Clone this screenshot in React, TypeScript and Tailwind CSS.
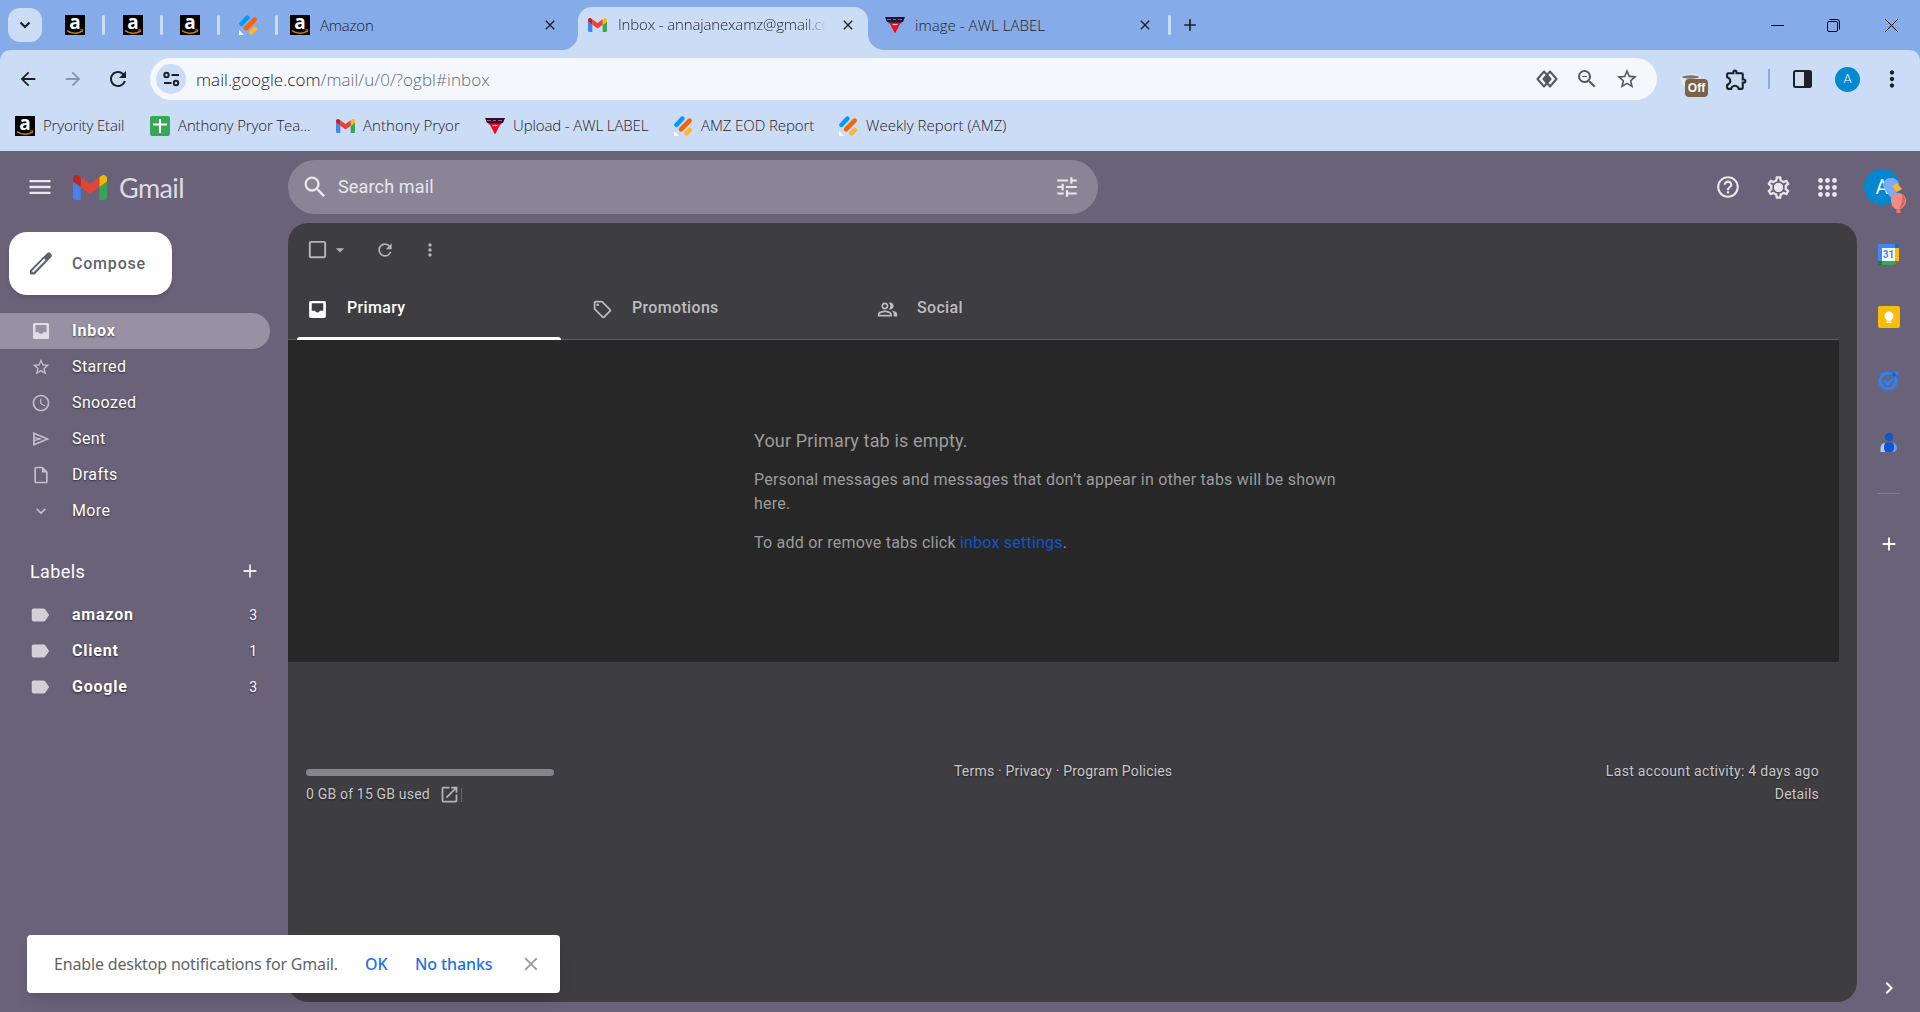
import React from 'react';
import {
  MdAccessTime,
  MdAdd,
  MdArrowBack,
  MdArrowDropDown,
  MdArrowForward,
  MdCheckBoxOutlineBlank,
  MdChevronRight,
  MdClose,
  MdExpandMore,
  MdHelpOutline,
  MdLabel,
  MdMenu,
  MdMoreVert,
  MdOpenInNew,
  MdOutlineExtension,
  MdOutlineInsertDriveFile,
  MdOutlineLocalOffer,
  MdOutlinePeopleAlt,
  MdOutlineSettings,
  MdRefresh,
  MdSearch,
  MdStarBorder,
  MdTune,
  MdZoomOut,
} from 'react-icons/md';

// ---------- logos ----------

const AmazonIcon: React.FC = () => (
  <svg width="20" height="20" viewBox="0 0 20 20" className="shrink-0 overflow-visible">
    <rect width="20" height="20" fill="#000" />
    <text x="10" y="14" textAnchor="middle" fontSize="19" fontWeight="bold" fontFamily="Open Sans, sans-serif" fill="#fff">
      a
    </text>
    <path d="M2 15.6c4.5 3.4 11 3.4 15 .6" fill="none" stroke="#c47a17" strokeWidth="1.6" />
    <path d="M15 15l3-.2-.8 2.6" fill="none" stroke="#c47a17" strokeWidth="1" />
  </svg>
);

const JotIcon: React.FC = () => (
  <svg width="20" height="20" viewBox="0 0 20 20" className="shrink-0">
    <g fill="none" strokeLinecap="round">
      <path d="M3.4 9L9.4 2.6" stroke="#0099ff" strokeWidth="4.4" />
      <path d="M8 13.4L16.6 4.6" stroke="#ff6100" strokeWidth="4.6" />
      <path d="M13.4 17.4l3.2-3.4" stroke="#ffb629" strokeWidth="4.6" />
    </g>
    <path d="M1 15v5h5z" fill="#fff" />
  </svg>
);

const AwlIcon: React.FC = () => (
  <svg width="20" height="20" viewBox="0 0 20 20" className="shrink-0">
    <path d="M0 2h20l-2 5H2z" fill="#2a1030" />
    <path d="M2 4.5h4m2 0h3m2 0h4" stroke="#d0456b" strokeWidth="1.2" />
    <path d="M3.500 7.500h13" stroke="#4a2448" strokeWidth="1.5" />
    <path d="M4.500 8h11l-5.500 10.500z" fill="#f5081c" />
    <path d="M7.5 9.5h5" stroke="#fbc4c8" strokeWidth="1.2" />
  </svg>
);

const SheetIcon: React.FC = () => (
  <svg width="20" height="20" viewBox="0 0 20 20" className="shrink-0">
    <rect width="20" height="20" rx="2" fill="#34a853" />
    <path d="M10 3v14M3 8.5h14" stroke="#fff" strokeWidth="2.2" />
  </svg>
);

const GmailLogo: React.FC<{ width: number; height: number }> = ({ width, height }) => (
  <svg width={width} height={height} viewBox="52 42 88 66" preserveAspectRatio="none" className="shrink-0">
    <path fill="#4285f4" d="M58 108h14V74L52 59v43c0 3.32 2.69 6 6 6" />
    <path fill="#34a853" d="M120 108h14c3.32 0 6-2.69 6-6V59l-20 15" />
    <path fill="#fbbc04" d="M120 48v26l20-15v-8c0-7.42-8.47-11.65-14.4-7.2" />
    <path fill="#ea4335" d="M72 74V48l24 18 24-18v26L96 92" />
    <path fill="#c5221f" d="M52 51v8l20 15V48l-5.6-4.2c-5.94-4.45-14.4-.22-14.4 7.2" />
  </svg>
);

// ---------- small glyphs ----------

interface GlyphProps {
  size?: number;
  className?: string;
}

const InboxIcon: React.FC<GlyphProps> = ({ size = 20, className }) => (
  <svg width={size} height={size} viewBox="0 0 20 20" fill="currentColor" className={className}>
    <path
      fillRule="evenodd"
      d="M3.500 2h13A1.500 1.500 0 0 1 18 3.500v13a1.500 1.500 0 0 1-1.500 1.500h-13A1.500 1.500 0 0 1 2 16.500v-13A1.500 1.500 0 0 1 3.500 2zM4.500 4v7.200H7.700a2.400 2.400 0 0 0 4.600 0h3.200V4z"
    />
  </svg>
);

const SendIcon: React.FC<GlyphProps> = ({ size = 20, className }) => (
  <svg width={size} height={size} viewBox="0 0 20 20" fill="none" stroke="currentColor" className={className}>
    <path d="M2.900 4.300L16.500 10 2.900 15.700z" strokeWidth="1.700" />
    <path d="M3 8.300L9 10l-6 1.700" strokeWidth="1.400" />
  </svg>
);

// ---------- browser window ----------

const TabDivider = () => <div className="h-5 w-[3px] shrink-0 rounded-full bg-[#cbdcf6]" />;

const TabStrip: React.FC = () => (
  <div className="flex h-[50px] items-center bg-[#85ace9]">
    <button className="ml-2 flex h-[34px] w-[34px] items-center justify-center rounded-xl bg-[#cbdcf6]">
      <svg width="12" height="12" viewBox="0 0 12 12" fill="none" stroke="#1f2023" strokeWidth="2.2">
        <path d="M1.5 3.5L6 8l4.500-4.500" />
      </svg>
    </button>
    <div className="ml-[23px] flex items-center gap-[17.3px]">
      <AmazonIcon />
      <TabDivider />
      <AmazonIcon />
      <TabDivider />
      <AmazonIcon />
      <TabDivider />
      <JotIcon />
      <TabDivider />
    </div>
    <div className="ml-[11.9px] flex w-[288px] items-center">
      <AmazonIcon />
      <span className="ml-2.5 flex-1 tracking-[-0.2px]">Amazon</span>
      <MdClose size={16} className="mr-5" />
    </div>
    <div className="relative flex h-[43px] w-[290px] items-center self-end rounded-t-[14px] bg-[#cbdcf6] pb-2">
      <svg width="16" height="16" viewBox="0 0 16 16" className="absolute -left-4 bottom-0">
        <path d="M16 0v16H0A16 16 0 0 0 16 0" fill="#cbdcf6" />
      </svg>
      <svg width="16" height="16" viewBox="0 0 16 16" className="absolute -right-4 bottom-0">
        <path d="M0 0v16h16A16 16 0 0 1 0 0" fill="#cbdcf6" />
      </svg>
      <div className="ml-[10px] flex">
        <GmailLogo width={19} height={14} />
      </div>
      <span className="ml-[11px] w-[208px] overflow-hidden whitespace-nowrap tracking-[-0.15px] [mask-image:linear-gradient(to_right,#000_90%,transparent)]">
        Inbox - annajanexamz@gmail.com
      </span>
      <MdClose size={16} className="ml-[14px] shrink-0" />
    </div>
    <div className="ml-[17px] flex w-[283px] items-center">
      <AwlIcon />
      <span className="ml-2.5 flex-1 tracking-[0.05px]">image - AWL LABEL</span>
      <MdClose size={16} className="mr-[15px]" />
    </div>
    <TabDivider />
    <MdAdd size={20} className="ml-[9px]" />
    <div className="ml-auto mr-[22px] flex items-center text-black">
      <svg width="13" height="13" viewBox="0 0 13 13" className="mr-[43px]">
        <path d="M0 6.500h13" stroke="currentColor" />
      </svg>
      <svg width="13" height="13" viewBox="0 0 13 13" fill="none" stroke="currentColor" className="mr-[45px]">
        <rect x=".5" y="2.500" width="10" height="10" rx="1.500" />
        <path d="M2.500.5h7.500a2.500 2.500 0 0 1 2.500 2.500v7.500" />
      </svg>
      <svg width="13" height="13" viewBox="0 0 13 13" stroke="currentColor">
        <path d="M0 0l13 13M13 0L0 13" />
      </svg>
    </div>
  </div>
);

const AddressBar: React.FC = () => (
  <div className="flex h-[58px] items-center">
    <MdArrowBack size={22} className="ml-[17px]" />
    <MdArrowForward size={22} className="ml-[23px] text-[#8794ad]" />
    <MdRefresh size={24} className="ml-[22px]" />
    <div className="ml-[20px] flex h-[42px] w-[1507px] items-center rounded-full bg-[#f4f8fd]">
      <div className="ml-1.5 flex h-[30px] w-[30px] items-center justify-center rounded-full bg-[#cbdcf6]">
        <svg width="17" height="16" viewBox="0 0 17 16" fill="none" stroke="#1f2023" strokeWidth="2">
          <circle cx="3.500" cy="4" r="2.200" />
          <path d="M8.500 4H16M1 12h7.500" />
          <circle cx="13" cy="12" r="2.200" />
        </svg>
      </div>
      <span className="ml-2.5 flex-1 pt-px text-[17px] tracking-[0.06px]">
        mail.google.com<span className="text-[#66696d]">/mail/u/0/?ogbl#inbox</span>
      </span>
      <svg width="22" height="18" viewBox="0 0 22 18" fill="none" stroke="#55585c" strokeWidth="2">
        <path d="M8 1.500L1.500 9 8 16.500l6.500-7.500z" strokeLinejoin="round" />
        <path d="M14 1.500L7.500 9l6.500 7.500L20.500 9z" strokeLinejoin="round" />
        <path d="M11 5.500L8 9l3 3.500L14 9z" fill="#55585c" />
      </svg>
      <MdZoomOut size={24} className="ml-[17px] text-[#55585c]" />
      <MdStarBorder size={24} className="ml-4 mr-[18px] text-[#55585c]" />
    </div>
    <div className="relative ml-[23px] h-6 w-[28px]">
      <svg width="22" height="16" viewBox="0 0 22 16" className="absolute left-0 top-[7px]">
        <ellipse cx="10.500" cy="3" rx="9.500" ry="2.500" fill="#777" stroke="#e8e6e0" strokeWidth="1.500" />
        <path d="M1 4l1 6 4 4V6z" fill="#ecebe8" />
      </svg>
      <span className="absolute left-[5px] top-[12px] flex h-[18px] w-[23px] items-center justify-center rounded bg-[#7a6247] font-['Liberation_Sans',sans-serif] text-xs font-bold text-white">
        Off
      </span>
    </div>
    <MdOutlineExtension size={25} className="ml-[16px]" />
    <div className="ml-[19px] h-5 w-0.5 bg-[#85ace9]" />
    <svg width="19" height="18" viewBox="0 0 19 18" className="ml-[23px]">
      <rect x="1" y="1" width="17" height="16" rx="1.500" fill="none" stroke="#1f2023" strokeWidth="2" />
      <path d="M11 1h7v16h-7z" fill="#1f2023" />
    </svg>
    <div className="ml-[23px] flex h-[25px] w-[25px] items-center justify-center rounded-full bg-[#0288d1] font-[Roboto,sans-serif] text-[13px] text-white">
      A
    </div>
    <MdMoreVert size={26} className="ml-[19px]" />
  </div>
);

// widths cover the gap to the next bookmark
const bookmarks = [
  { icon: <AmazonIcon />, label: 'Pryority Etail', width: 'w-[135px]', tracking: 'tracking-[-0.15px]' },
  { icon: <SheetIcon />, label: 'Anthony Pryor Tea...', width: 'w-[186px]', tracking: 'tracking-[-0.13px]' },
  { icon: <GmailLogo width={19} height={14} />, label: 'Anthony Pryor', width: 'w-[149px]', tracking: 'tracking-[0.04px]' },
  { icon: <AwlIcon />, label: 'Upload - AWL LABEL', width: 'w-[188px]', tracking: 'tracking-[-0.12px]' },
  { icon: <JotIcon />, label: 'AMZ EOD Report', width: 'w-[165px]', tracking: 'tracking-[-0.1px]' },
  { icon: <JotIcon />, label: 'Weekly Report (AMZ)', width: 'w-[180px]', tracking: 'tracking-[0.04px]' },
];

const BookmarksBar: React.FC = () => (
  <div className="flex h-[36px] items-center pl-[15px]">
    {bookmarks.map(b => (
      <div key={b.label} className={`flex items-center gap-2 whitespace-nowrap ${b.width} ${b.tracking}`}>
        {b.icon}
        <span className="pb-px">{b.label}</span>
      </div>
    ))}
  </div>
);

// ---------- gmail ----------

const GmailHeader: React.FC = () => (
  <header className="flex h-[72px] shrink-0 items-center text-[#e8e7eb]">
    <MdMenu size={28} className="ml-[26px]" />
    <div className="ml-[19px] flex opacity-95">
      <GmailLogo width={34} height={25} />
    </div>
    <span className="ml-[12px] w-[169px] font-[Lato,sans-serif] text-[27px] leading-none tracking-[-0.6px] text-[#dddbe2]">
      Gmail
    </span>
    <div className="flex h-[54px] w-[810px] items-center rounded-full bg-[#8a8596]">
      <MdSearch size={28} className="ml-[13px]" />
      <span className="ml-[9px] flex-1 pb-px text-[18px] tracking-[0.15px]">Search mail</span>
      <MdTune size={26} className="mr-[18px]" />
    </div>
    <MdHelpOutline size={26} className="ml-[617px]" />
    <svg width="27" height="27" viewBox="0 0 24 24" className="ml-[24px] shrink-0">
      <MdOutlineSettings size={24} />
      <circle cx="12" cy="12" r="4" fill="#e8e7eb" />
    </svg>
    <svg width="19" height="19" viewBox="0 0 19 19" fill="currentColor" className="ml-[26px] shrink-0">
      {[2.5, 9.5, 16.5].map(y => [2.5, 9.5, 16.5].map(x => <circle key={`${x}-${y}`} cx={x} cy={y} r="2.400" />))}
    </svg>
    <div className="relative ml-[27px] flex h-9 w-9 shrink-0 items-center justify-center rounded-full bg-[#0288d1] text-[20px] text-white">
      A
      <svg width="24" height="38" viewBox="0 0 24 38" className="absolute left-[19px] top-[9px]">
        <path d="M0 8a8 8 0 1 1 14 5l-2 6-3 2-4-5z" fill="#7baaf7" />
        <path d="M9 8l5-3 5 6-5 3z" fill="#fbb829" />
        <path d="M8 22c0-5 3-7 7-7s8 3 8 7.500c0 5-4 9-8 9s-7-4-7-9.500" fill="#ee8c86" />
        <path d="M19 16c5 4 4 12-3 15 3-5 4-10 3-15" fill="#e0645d" />
        <path d="M14 31h3l1 4h-5z" fill="#e8776f" />
      </svg>
    </div>
  </header>
);

interface NavItem {
  icon: React.ComponentType<GlyphProps>;
  label: string;
  active?: boolean;
}

const navItems: NavItem[] = [
  { icon: InboxIcon, label: 'Inbox', active: true },
  { icon: MdStarBorder, label: 'Starred' },
  { icon: MdAccessTime, label: 'Snoozed' },
  { icon: SendIcon, label: 'Sent' },
  { icon: MdOutlineInsertDriveFile, label: 'Drafts' },
  { icon: MdExpandMore, label: 'More' },
];

const labels = [
  { name: 'amazon', count: 3 },
  { name: 'Client', count: 1 },
  { name: 'Google', count: 3 },
];

const Sidebar: React.FC = () => (
  <nav className="w-[288px] shrink-0 text-white">
    <button className="ml-[9px] mt-[9px] flex h-[63px] w-[163px] items-center rounded-[18px] bg-white text-[#5f6368] shadow-md">
      <svg width="22" height="23" viewBox="0 0 22 23" className="ml-[21px]" fill="#5f6368">
        <path
          fillRule="evenodd"
          d="M0 18.300L17 1.200a2.400 2.400 0 0 1 3.400 0l.7.8a2.400 2.400 0 0 1 0 3.300L4.600 22.500H0zM2.300 20.200h1.300L15.600 7.900l-1.400-1.400L2.300 18.800z"
        />
      </svg>
      <span className="ml-[20px] text-base font-medium tracking-[0.8px]">Compose</span>
    </button>
    <div className="mt-[18px] [text-shadow:0_1px_2px_rgba(0,0,0,0.6)]">
      {navItems.map(({ icon: Icon, label, active }) => (
        <div
          key={label}
          className={`flex h-9 w-[270px] items-center pl-[31px] text-base ${
            active ? 'rounded-r-full bg-[#9891a3] font-bold tracking-[0.8px]' : 'tracking-[0.38px]'
          }`}
        >
          <Icon size={20} className={active ? 'text-[#e0dee5]' : 'text-[#c3c0c9]'} />
          <span className="ml-[21px]">{label}</span>
        </div>
      ))}
    </div>
    <div className="mt-[22px] flex h-10 items-center pl-[30px] pr-[27px]">
      <span className="flex-1 text-[18px] tracking-[0.4px]">Labels</span>
      <MdAdd size={22} className="text-[#e8e7eb]" />
    </div>
    <div className="mt-[6px] [text-shadow:0_1px_2px_rgba(0,0,0,0.6)]">
      {labels.map(l => (
        <div key={l.name} className="flex h-9 items-center pl-[29px] pr-[31px]">
          <MdLabel size={22} className="text-[#d3d1d8]" />
          <span className="ml-[21px] flex-1 text-base font-bold tracking-[0.8px]">{l.name}</span>
          <span className="text-[14px]">{l.count}</span>
        </div>
      ))}
    </div>
  </nav>
);

const tabs: NavItem[] = [
  { icon: InboxIcon, label: 'Primary', active: true },
  { icon: MdOutlineLocalOffer, label: 'Promotions' },
  { icon: MdOutlinePeopleAlt, label: 'Social' },
];

const MailPanel: React.FC = () => (
  <main className="flex h-[779px] w-[1569px] flex-col rounded-[20px] bg-[#3e3d42]">
    <div className="flex h-[54px] items-center pl-[18px] text-[#b5b5b7]">
      <MdCheckBoxOutlineBlank size={23} className="mb-px" />
      <MdArrowDropDown size={20} className="ml-px" />
      <MdRefresh size={20} className="ml-[25px]" />
      <MdMoreVert size={20} className="ml-[25px]" />
    </div>
    <div className="flex h-[63px] w-[1551px] border-b border-[#5c5b5f]">
      {tabs.map(({ icon: Icon, label, active }) => (
        <div
          key={label}
          className={`relative flex w-[285px] items-center pl-[19px] text-base font-medium tracking-[0.33px] ${
            active ? 'text-white' : 'text-[#bdbdbf]'
          }`}
        >
          <Icon size={21} className="mt-[3px]" />
          <span className="-mt-px ml-[19px]">{label}</span>
          {active && <div className="absolute -bottom-px left-[9px] h-[3px] w-[264px] rounded-t-sm bg-white" />}
        </div>
      ))}
    </div>
    <section className="h-[322px] w-[1551px] bg-[#272727] pl-[466px] pt-[87px] text-base leading-6 tracking-[0.22px] text-[#9c9c9c]">
      <p className="text-[18px] leading-[28px] tracking-[0.15px]">Your Primary tab is empty.</p>
      <p className="mt-[13px] w-[600px]">
        Personal messages and messages that don’t appear in other tabs will be shown here.
      </p>
      <p className="mt-[15px]">
        To add or remove tabs click <a className="text-[#0b57d0]">inbox settings</a>.
      </p>
    </section>
    <footer className="mt-[98px] flex pl-[18px] pr-[38px] text-sm leading-[23px] text-[#c8c8ca] [text-shadow:0_1px_2px_rgba(0,0,0,0.5)]">
      <div className="w-[648px]">
        <div className="mt-[9px] h-[7px] w-[248px] rounded bg-[#80868b]" />
        <div className="mt-[7px] flex items-center">
          <span className="w-[133px] whitespace-nowrap tracking-[0.18px]">0 GB of 15 GB used</span>
          <MdOpenInNew size={21} className="mr-px text-[#b5b5b7]" />
          <div className="h-3.5 w-px bg-[#6b6a6e]" />
        </div>
      </div>
      <span className="flex-1 tracking-[0.19px]">Terms · Privacy · Program Policies</span>
      <div className="text-right">
        <div className="tracking-[0.31px]">Last account activity: 4 days ago</div>
        <div className="tracking-[0.2px]">Details</div>
      </div>
    </footer>
  </main>
);

const SidePanel: React.FC = () => (
  <aside className="flex flex-1 flex-col items-center pt-[21px]">
    <svg width="21" height="21" viewBox="0 0 21 21">
      <path d="M0 1.500C0 .5.500 0 1.500 0H17v4H4v13H0z" fill="#4285f4" />
      <path d="M17 0h2.500C20.500 0 21 .5 21 1.500V4h-4z" fill="#1967d2" />
      <path d="M17 4h4v13h-4z" fill="#fbbc04" />
      <path d="M4 17h13v4H4z" fill="#34a853" />
      <path d="M0 17h4v4H1.500C.5 21 0 20.500 0 19.500z" fill="#188038" />
      <path d="M17 17h4l-4 4z" fill="#ea4335" />
      <path d="M4 4h13v13H4z" fill="#fff" />
      <text x="10.500" y="14" textAnchor="middle" fontSize="10" fontWeight="bold" fontFamily="Roboto, sans-serif" fill="#4285f4">
        31
      </text>
    </svg>
    <svg width="22" height="22" viewBox="0 0 22 22" className="mt-[41px]">
      <rect width="22" height="22" rx="2" fill="#fbbc04" />
      <circle cx="11" cy="10" r="4.500" fill="#fff" />
      <path d="M8.500 12h5v2.500h-5zM8.500 15.500h5V17h-5z" fill="#fff" />
    </svg>
    <svg width="21" height="21" viewBox="0 0 21 21" fill="none" className="mt-[42px]">
      <circle cx="10" cy="11" r="8" stroke="#2684fc" strokeWidth="3" />
      <path d="M6 10.500l3.500 3.500 5-5" stroke="#2684fc" strokeWidth="3" />
      <path d="M13.500 5l2.500-2.500 2.500 2.500L16 7.500z" fill="#0066da" />
      <circle cx="18.800" cy="3" r="2" fill="#2684fc" />
    </svg>
    <svg width="18" height="20" viewBox="0 0 18 20" className="mt-[42px]">
      <circle cx="9" cy="4" r="4" fill="#0b57d0" />
      <path d="M5 10C2 10 .5 13 .5 16v3H5z" fill="#aecbfa" />
      <path d="M12 10c3 0 5 2 5 5s-2 4-5 4z" fill="#669df6" />
      <rect x="4" y="9.500" width="10" height="9.500" rx="4" fill="#0b57d0" />
    </svg>
    <div className="mt-[40px] h-px w-[23px] bg-[#857e91]" />
    <MdAdd size={22} className="mt-[39px] text-white" />
    <MdChevronRight size={24} className="mt-auto mb-3 text-white" />
  </aside>
);

const Toast: React.FC = () => (
  <div className="absolute left-[27px] top-[935px] flex h-[58px] w-[533px] items-center rounded bg-white text-base text-[#5f6368] shadow-lg">
    <span className="ml-[27px] w-[311px] whitespace-nowrap tracking-[-0.17px]">Enable desktop notifications for Gmail.</span>
    <span className="w-[50px] font-medium text-[#1a73e8]">OK</span>
    <span className="w-[105px] font-medium tracking-[-0.1px] text-[#1a73e8]">No thanks</span>
    <MdClose size={22} className="text-[#9a9da1]" />
  </div>
);

export default function App() {
  return (
    <div className="relative flex h-[1012px] w-[1920px] flex-col overflow-hidden bg-[#6a6279]">
      <div className="h-[151px] shrink-0 bg-[#85ace9] font-['Open_Sans',sans-serif] text-[15px] font-light text-[#1f2023]">
        <TabStrip />
        <div className="h-[101px] rounded-t-[10px] bg-[#cbdcf6]">
          <AddressBar />
          <BookmarksBar />
        </div>
      </div>
      <div className="flex min-h-0 flex-1 flex-col font-[Roboto,sans-serif]">
        <GmailHeader />
        <div className="flex min-h-0 flex-1">
          <Sidebar />
          <MailPanel />
          <SidePanel />
        </div>
      </div>
      <Toast />
    </div>
  );
}
